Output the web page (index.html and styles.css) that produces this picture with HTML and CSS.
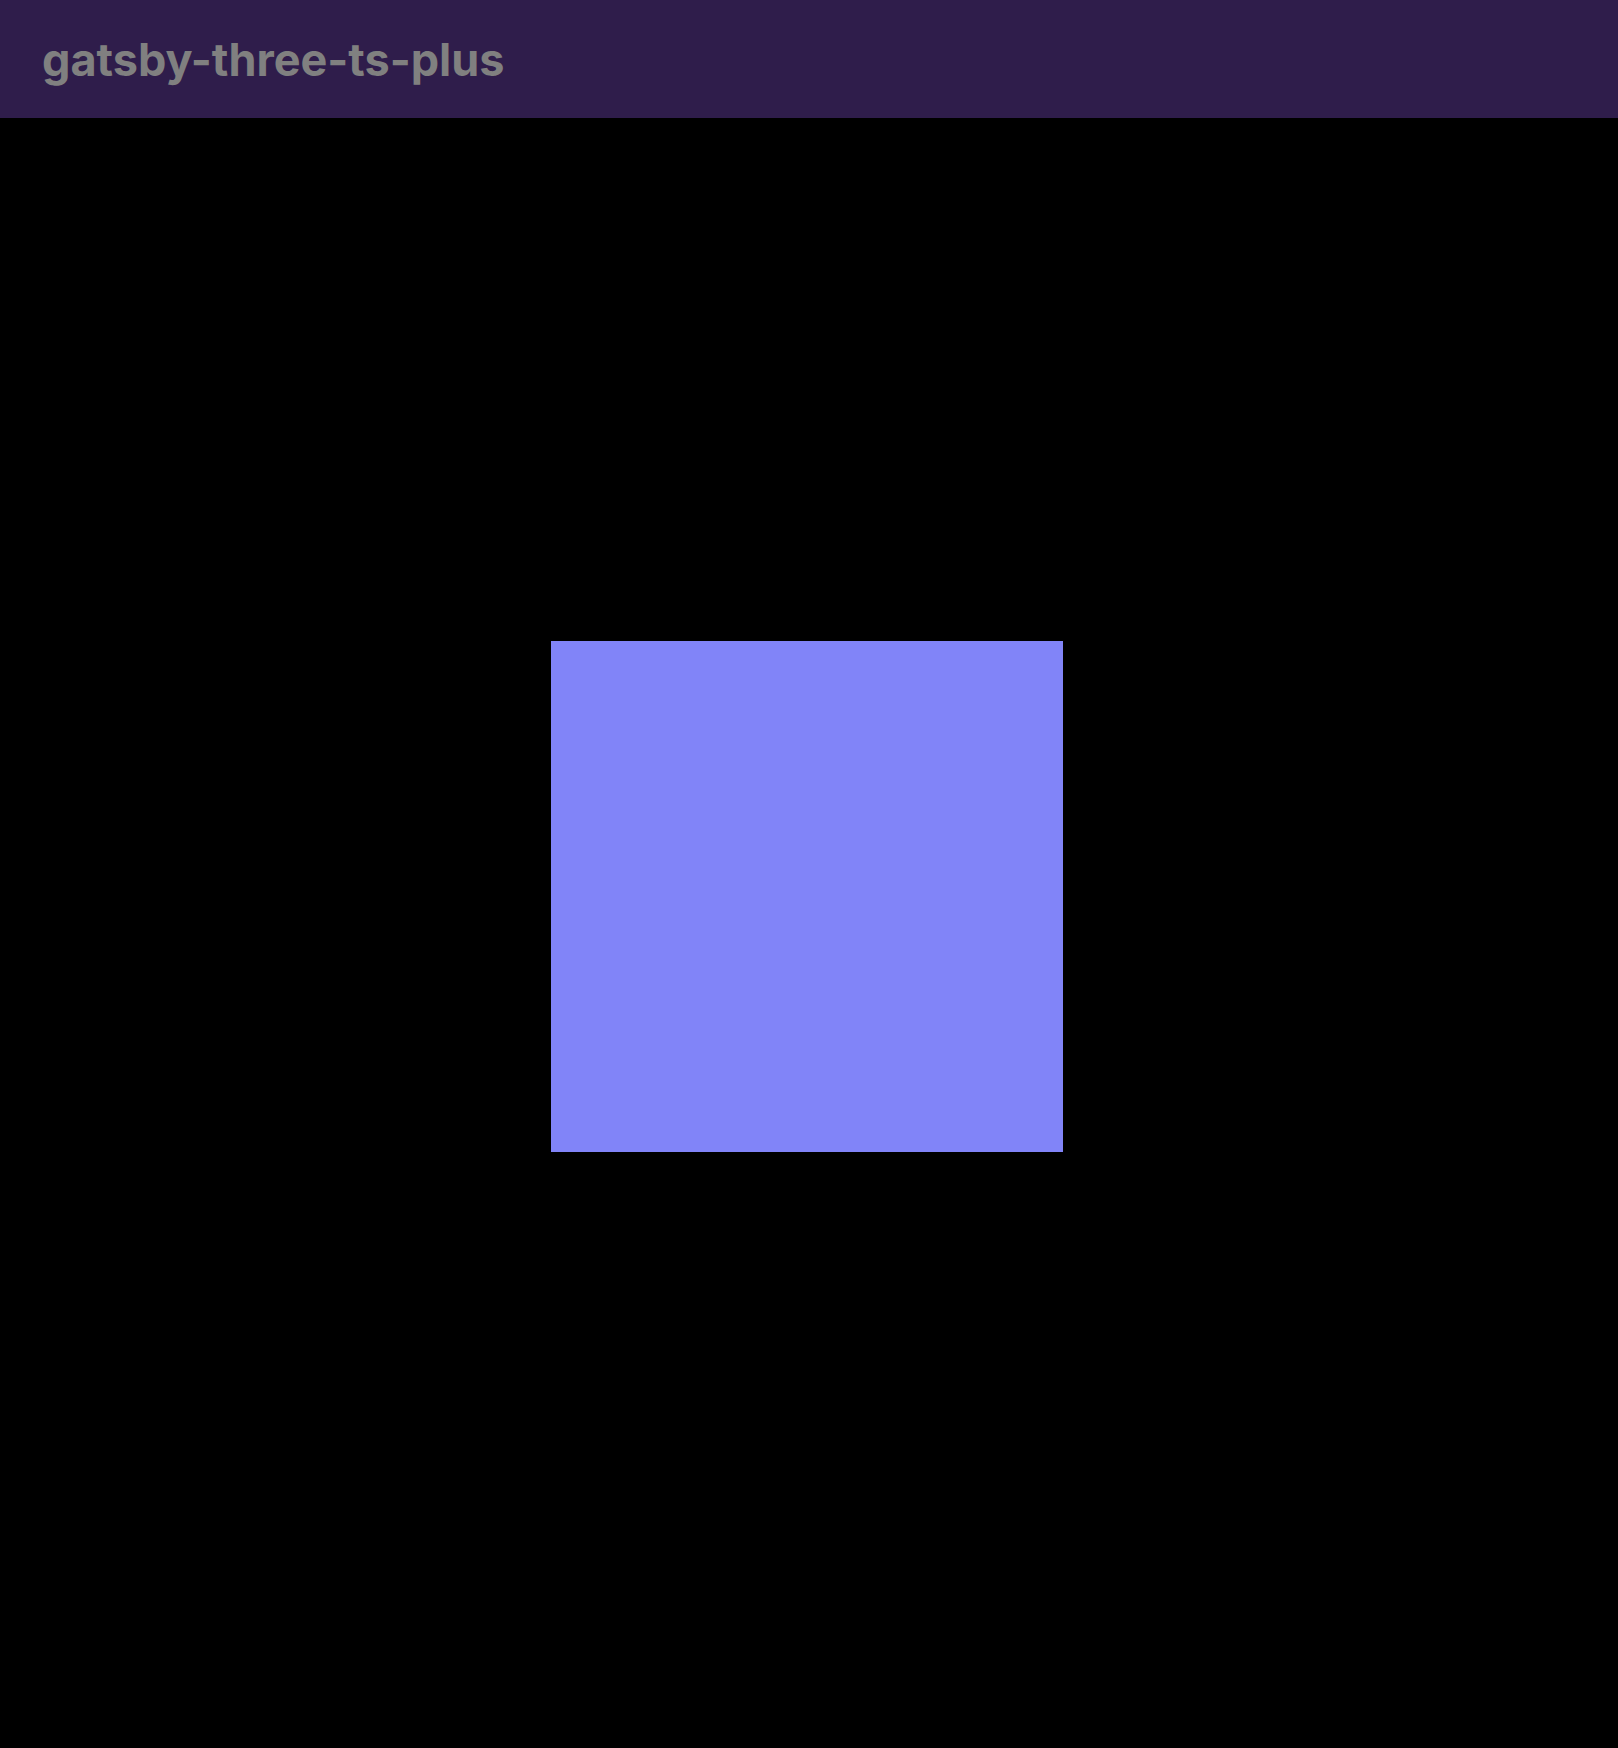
FILE: index.html
```html
<!DOCTYPE html>
<html lang="en">
<head>
<meta charset="utf-8">
<title>gatsby-three-ts-plus</title>
<link rel="stylesheet" href="styles.css">
</head>
<body>
<header class="site-header">
  <h1 class="site-title">gatsby-three-ts-plus</h1>
</header>
<main class="stage">
  <div class="plane"></div>
</main>
</body>
</html>
```
FILE: styles.css
```css
html, body {
  margin: 0;
  padding: 0;
  background: #000;
}
body {
  width: 1618px;
  height: 1748px;
  overflow: hidden;
  font-family: Inter, "Liberation Sans", sans-serif;
}
.site-header {
  height: 118px;
  background: #2f1d4b;
  display: flex;
  align-items: center;
  padding-left: 42px;
  box-sizing: border-box;
}
.site-title {
  margin: 0;
  font-size: 45px;
  font-weight: 700;
  color: #808080;
  letter-spacing: 0;
  line-height: 1;
}
.stage {
  height: 1630px;
  padding-top: 523px;
  padding-left: 551px;
  box-sizing: border-box;
}
.plane {
  width: 512px;
  height: 511px;
  background: #8184f8;
}
```
